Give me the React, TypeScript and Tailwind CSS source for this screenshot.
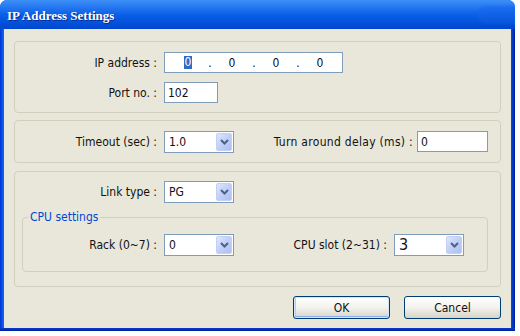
import React from "react";

const font = "font-['DejaVu_Sans_Condensed','DejaVu_Sans',sans-serif]";

function Chevron() {
  return (
    <svg width="9" height="6" viewBox="0 0 9 6">
      <path d="M1 1 L4.5 4.5 L8 1" fill="none" stroke="#4d6185" strokeWidth="2" />
    </svg>
  );
}

function Select({ value, w = "w-[70px]", big = false }: { value: string; w?: string; big?: boolean }) {
  return (
    <div className={`${w} h-[22px] border border-[#7f9db9] bg-white flex items-center justify-between p-[1px]`}>
      <span className={`pl-[3px] text-[#111] ${big ? "text-[16px] font-light" : "text-[12px]"}`}>{value}</span>
      <div className="w-[16px] h-full rounded-[2px] border border-[#c3d0f5] bg-gradient-to-br from-[#dfe7fd] via-[#c0cff9] to-[#aebff0] flex items-center justify-center">
        <Chevron />
      </div>
    </div>
  );
}

function Input({ value, w }: { value: string; w: string }) {
  return (
    <div className={`${w} h-[21px] border border-[#7f9db9] bg-white flex items-center pl-[3px] text-[12px] text-[#111]`}>
      {value}
    </div>
  );
}

function Group({ className = "", children }: { className?: string; children: React.ReactNode }) {
  return (
    <div className={`border border-[#d0d0bf] rounded-[4px] ${className}`}>{children}</div>
  );
}

function Button({ label, def = false }: { label: string; def?: boolean }) {
  return (
    <div
      className={`w-[97px] h-[23px] rounded-[3px] border border-[#003c74] bg-gradient-to-b from-[#ffffff] via-[#f3f2ee] to-[#d8d3c8] flex items-center justify-center text-[12px] text-[#111] ${
        def ? "shadow-[inset_0_0_0_1px_#cee7ff,inset_0_-2px_0_0_#8eaff0,inset_2px_0_0_0_#b5cdf5]" : ""
      }`}
    >
      {label}
    </div>
  );
}

export default function App() {
  return (
    <div className={`w-[520px] h-[336px] bg-white ${font}`}>
      <div className="w-[515px] h-[331px] flex flex-col rounded-t-[7px] overflow-hidden bg-[#0a5ce6]">
        {/* title bar */}
        <div className="relative h-[29px] shrink-0 bg-gradient-to-b from-[#3d8ff7] via-[#0a5fe8] to-[#0046cf] flex items-center pl-[7px] pt-[3px] overflow-hidden">
          <div className="absolute right-[-6px] top-[6px] w-[44px] h-[18px] rounded-l-full bg-gradient-to-b from-[#1a6cf0] to-[#0d58de] opacity-70 blur-[1px]" />
          <span className="relative font-['Liberation_Serif',serif] font-bold text-[13px] text-white [text-shadow:1px_1px_0_#0b2a8a]">
            IP Address Settings
          </span>
        </div>
        <div className="flex-1 flex">
          <div className="w-[4px] bg-gradient-to-r from-[#0831d9] to-[#166aee]" />
          {/* content */}
          <div className="flex-1 bg-[#e9e7da] flex flex-col px-[10px] pt-[12px] text-[#111]">
            {/* Group 1 */}
            <Group className="h-[72px] flex flex-col pt-[10px]">
              <div className="flex items-center">
                <div className="w-[142px] text-right text-[12px]">IP address :</div>
                <div className="ml-[7px] w-[179px] h-[21px] border border-[#7f9db9] bg-white flex items-center pl-[12px] text-[12px]">
                  <span className="w-[22px] flex justify-center">
                    <span className="bg-[#316ac5] text-white w-[8px] h-[13px] leading-[13px] text-center">0</span>
                  </span>
                  <span className="w-[22px] text-center">.</span>
                  <span className="w-[22px] text-center">0</span>
                  <span className="w-[22px] text-center">.</span>
                  <span className="w-[22px] text-center">0</span>
                  <span className="w-[22px] text-center">.</span>
                  <span className="w-[22px] text-center">0</span>
                </div>
              </div>
              <div className="flex items-center mt-[9px]">
                <div className="w-[142px] text-right text-[12px]">Port no. :</div>
                <div className="ml-[7px]">
                  <Input value="102" w="w-[54px]" />
                </div>
              </div>
            </Group>
            {/* Group 2 */}
            <Group className="mt-[7px] h-[43px] flex items-center pr-[12px]">
              <div className="w-[142px] text-right text-[12px]">Timeout (sec) :</div>
              <div className="ml-[7px]">
                <Select value="1.0" />
              </div>
              <div className="flex-1 text-right text-[12px] pr-[4px] tracking-[0.3px]">Turn around delay (ms) :</div>
              <Input value="0" w="w-[71px]" />
            </Group>
            {/* Group 3 */}
            <Group className="mt-[8px] h-[116px] flex flex-col pt-[9px]">
              <div className="flex items-center">
                <div className="w-[142px] text-right text-[12px]">Link type :</div>
                <div className="ml-[7px]">
                  <Select value="PG" />
                </div>
              </div>
              <div className="relative mt-[14px] ml-[7px] mr-[12px] h-[55px] border border-[#d0d0bf] rounded-[4px] flex items-start pt-[16px] pr-[23px]">
                <span className="absolute left-[5px] top-[-9px] px-[2px] bg-[#e9e7da] text-[12px] text-[#0046d5] leading-[16px]">
                  CPU settings
                </span>
                <div className="flex items-center w-full">
                  <div className="w-[134px] text-right text-[12px]">Rack (0~7) :</div>
                  <div className="ml-[7px]">
                    <Select value="0" />
                  </div>
                  <div className="flex-1 text-right text-[12px] pr-[7px]">CPU slot (2~31) :</div>
                  <Select value="3" big />
                </div>
              </div>
            </Group>
            <div className="mt-[9px] flex justify-end gap-[14px]">
              <Button label="OK" def />
              <Button label="Cancel" />
            </div>
          </div>
          <div className="w-[4px] bg-gradient-to-r from-[#0a4fe0] to-[#001d9c]" />
        </div>
        <div className="h-[3px] shrink-0 bg-gradient-to-b from-[#0a3fd0] to-[#001d9c]" />
      </div>
    </div>
  );
}
